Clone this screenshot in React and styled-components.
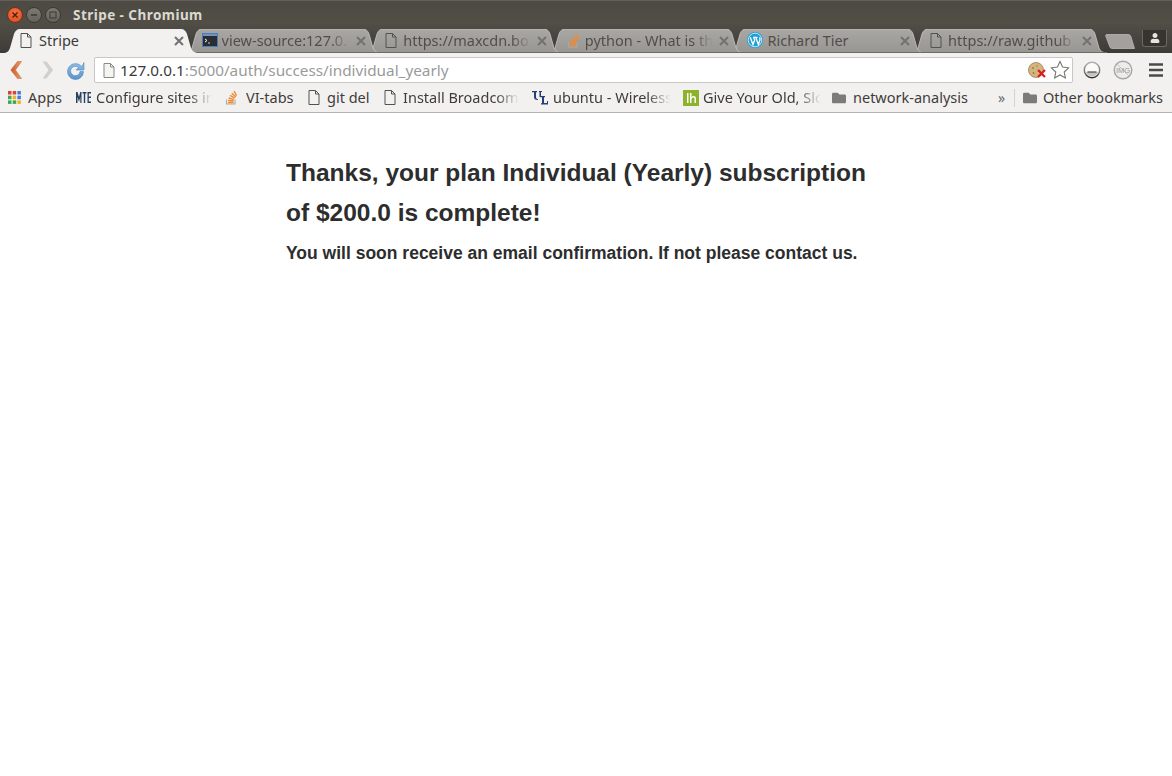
import React from 'react';
import styled, { createGlobalStyle } from 'styled-components';
import { FaUser, FaFolder } from 'react-icons/fa';

const GlobalStyle = createGlobalStyle`
  html, body {
    margin: 0;
    padding: 0;
    background: #fff;
  }
  #root {
    min-height: 776px;
  }
`;

const uiFont = `"Noto Sans", "Open Sans", "DejaVu Sans", sans-serif`;

const Chrome = styled.header`
  font-family: ${uiFont};
  background: linear-gradient(#4c4a43 0, #514e46 22px, #45433d 40px, #3c3b37 53px);
  border-top: 1px solid #63605a;
`;

const TitleBar = styled.div`
  height: 28px;
  display: flex;
  align-items: center;
  padding-left: 7px;
  gap: 3px;
`;

const WindowButton = styled.span`
  width: 16px;
  height: 16px;
  box-sizing: border-box;
  border-radius: 50%;
  display: flex;
  align-items: center;
  justify-content: center;
  background: ${(p) => (p.$close ? 'radial-gradient(circle at 50% 35%, #f0754a, #d9481c)' : 'linear-gradient(#7b7972, #65635c)')};
  border: 1px solid ${(p) => (p.$close ? '#7a3015' : '#3a3934')};
  color: ${(p) => (p.$close ? '#5c1c08' : '#3a3934')};
`;

const WindowTitle = styled.span`
  margin-left: 9px;
  font-size: 13.5px;
  font-weight: 700;
  letter-spacing: 0.45px;
  color: #dcd9d1;
`;

const TabStrip = styled.div`
  height: 24px;
  display: flex;
  padding-left: 3px;
  position: relative;
`;

const HiddenDefs = styled.svg`
  position: absolute;
`;

const Tab = styled.div`
  position: relative;
  flex: none;
  width: 196px;
  height: 24px;
  margin-right: -14.4px;
  z-index: ${(p) => p.$z};
  font-size: 14.5px;
  color: ${(p) => (p.$active ? '#3c3b37' : '#524d4a')};
`;

const TabShape = styled.svg`
  position: absolute;
  inset: 0;
`;

const TabContent = styled.div`
  position: relative;
  height: 22px;
  display: flex;
  align-items: center;
  padding-left: ${(p) => p.$pad}px;
`;

const TabIcon = styled.span`
  flex: none;
  width: 16px;
  height: 16px;
  display: flex;
  align-items: center;
  justify-content: center;
`;

const TabTitle = styled.span`
  margin-left: ${(p) => p.$gap}px;
  width: 128px;
  white-space: nowrap;
  overflow: hidden;
  ${(p) =>
    p.$fade &&
    `-webkit-mask-image: linear-gradient(to right, #000 85%, transparent);
     mask-image: linear-gradient(to right, #000 85%, transparent);`}
`;

const TabClose = styled.svg`
  position: absolute;
  left: 171px;
  top: 7px;
`;

const NewTab = styled.svg`
  flex: none;
  margin: 5px 0 0 12px;
  position: relative;
  z-index: 1;
`;

const ProfileButton = styled.div`
  position: absolute;
  right: 5px;
  top: 1px;
  width: 25px;
  height: 17px;
  box-sizing: border-box;
  display: flex;
  align-items: center;
  justify-content: center;
  color: #e6e4df;
  background: #35342f;
  border: 1px solid #6a675f;
  border-top: 0;
  border-radius: 0 0 3px 3px;
`;

const Toolbar = styled.div`
  height: 32px;
  background: #f2f1f0;
  display: flex;
  align-items: center;
  padding: 2px 7px 0 10px;
  box-sizing: border-box;
  font-family: ${uiFont};
`;

const NavIcon = styled.svg`
  flex: none;
  margin-right: ${(p) => p.$mr || 0}px;
  margin-left: ${(p) => p.$ml || 0}px;
`;

const Omnibox = styled.div`
  flex: none;
  width: 979px;
  height: 26px;
  margin-left: 9px;
  box-sizing: border-box;
  background: #fff;
  border: 1px solid #c9c7c3;
  border-radius: 2px;
  display: flex;
  align-items: center;
  padding: 0 2px 0 8px;
  font-size: 15.3px;
`;

const UrlHost = styled.span`
  margin-left: 5px;
  color: #3a3a3a;
`;

const UrlPath = styled.span`
  color: #9a9a9a;
  flex: 1;
`;

const ToolButtons = styled.div`
  display: flex;
  align-items: center;
  margin-left: 10px;
  gap: 10px;
`;

const BookmarksBar = styled.nav`
  height: 25px;
  padding: 0 0 2px 7px;
  background: #f2f1f0;
  border-bottom: 1px solid #b5b3af;
  display: flex;
  align-items: center;
  font-family: ${uiFont};
  font-size: 14.5px;
  color: #3f3c3a;
`;

const Bookmark = styled.div`
  flex: none;
  width: ${(p) => p.$w}px;
  display: flex;
  align-items: center;
  gap: ${(p) => p.$gap || 7}px;
  white-space: nowrap;
`;

const BookmarkLabel = styled.span`
  position: relative;
  top: -1px;
  overflow: hidden;
  ${(p) => p.$w && `width: ${p.$w}px;`}
  ${(p) =>
    p.$w &&
    `-webkit-mask-image: linear-gradient(to right, #000 80%, transparent);
     mask-image: linear-gradient(to right, #000 80%, transparent);`}
`;

const Divider = styled.span`
  width: 1px;
  height: 18px;
  background: #d5d3cf;
  margin: 0 8px 0 4px;
`;

const More = styled.span`
  font-size: 14px;
  color: #6b6966;
  width: 12px;
`;

const Page = styled.main`
  width: 600px;
  margin: 0 auto;
  padding-top: 40px;
  font-family: "Liberation Sans", Arial, sans-serif;
  color: #2d2d2d;
`;

const Heading = styled.h3`
  margin: 0 0 7px;
  font-size: 24.5px;
  line-height: 40px;
  font-weight: 700;
`;

const SubHeading = styled.h4`
  margin: 0;
  font-size: 17.5px;
  line-height: 26px;
  font-weight: 700;
`;

const FileIcon = ({ color = '#55524e', fill = 'none' }) => (
  <svg width="12" height="15" viewBox="0 0 12 15">
    <path d="M1 .5h6.500L11 4v10.500H1z" fill={fill} stroke={color} />
    <path d="M7.500.5V4H11" fill="none" stroke={color} />
  </svg>
);

const CloseIcon = () => (
  <TabClose width="10" height="10" viewBox="0 0 10 10">
    <path d="M1 1l8 8M9 1l-8 8" stroke="#74726f" strokeWidth="2" />
  </TabClose>
);

const TerminalIcon = () => (
  <svg width="16" height="14" viewBox="0 0 16 14">
    <rect x=".5" y=".5" width="15" height="13" fill="#2a2d33" stroke="#4a7db5" />
    <rect x="1" y="1" width="14" height="2" fill="#6f95c0" />
    <path d="M3 6l2 1.500L3 9" fill="none" stroke="#fff" />
    <path d="M6 10h2" stroke="#ccc" />
  </svg>
);

const StackIcon = () => (
  <svg width="12" height="15" viewBox="0 0 12 15">
    <path d="M1.500 9.500v4.500h8.500V9.500" fill="none" stroke="#b9a68f" strokeWidth="1.100" />
    <path d="M3 12.500h5.500M3.100 10.400l5.400.6M3.700 8l5.200 1.600M5 5.400l4.700 2.800M6.800 3.200l4 3.800M9 1.200l2.600 4.500" fill="none" stroke="#ee8a35" strokeWidth="1.400" />
  </svg>
);

const WordpressIcon = () => (
  <svg width="16" height="16" viewBox="0 0 16 16">
    <circle cx="8" cy="8" r="8" fill="#1f9fd6" />
    <circle cx="8" cy="8" r="6.800" fill="none" stroke="#e9f6fb" strokeWidth=".8" />
    <path d="M3.200 5.300L6 12.600l1.700-4.500-1.200-2.800M6.400 5.300h4.100M8.700 5.300l2.700 7.300 1.500-4.500c.3-1 .2-1.800-.4-2.800" fill="none" stroke="#fff" strokeWidth="1.300" />
  </svg>
);

const tabs = [
  { title: 'Stripe', icon: <FileIcon />, active: true, pad: 15, gap: 5 },
  { title: 'view-source:127.0.', icon: <TerminalIcon />, pad: 17, fade: true },
  { title: 'https://maxcdn.bo', icon: <FileIcon />, pad: 17, fade: true },
  { title: 'python - What is th', icon: <StackIcon />, pad: 17, fade: true },
  { title: 'Richard Tier', icon: <WordpressIcon />, pad: 18 },
  { title: 'https://raw.github', icon: <FileIcon />, pad: 17, fade: true },
];

function TabItem({ tab, z }) {
  const fill = tab.active ? '#f2f1f0' : 'url(#inactiveTab)';
  return (
    <Tab $active={tab.active} $z={z}>
      <TabShape width="196" height="24" viewBox="0 0 196 24">
        <path
          d="M0 24C4 24 6 22 7 19L11 5C12 2 14 0 17 0H178C181 0 183 2 184 5L188 19C189 22 192 24 196 24Z"
          fill={fill}
          stroke={tab.active ? 'none' : '#c9c7c3'}
          strokeWidth="0.8"
        />
        {!tab.active && <path d="M0 23.500H196" stroke="#6d6b66" />}
      </TabShape>
      <TabContent $pad={tab.pad}>
        <TabIcon>{tab.icon}</TabIcon>
        <TabTitle $gap={tab.gap ?? 4} $fade={tab.fade}>{tab.title}</TabTitle>
        <CloseIcon />
      </TabContent>
    </Tab>
  );
}

export default function App() {
  return (
    <>
      <GlobalStyle />
      <Chrome>
        <TitleBar>
          <WindowButton $close>
            <svg width="8" height="8" viewBox="0 0 8 8">
              <path d="M1.500 1.500l5 5M6.500 1.500l-5 5" stroke="currentColor" strokeWidth="1.500" />
            </svg>
          </WindowButton>
          <WindowButton>
            <svg width="8" height="8" viewBox="0 0 8 8">
              <path d="M1 4h6" stroke="currentColor" strokeWidth="1.500" />
            </svg>
          </WindowButton>
          <WindowButton>
            <svg width="8" height="8" viewBox="0 0 8 8">
              <rect x="1" y="1" width="6" height="6" fill="none" stroke="currentColor" />
            </svg>
          </WindowButton>
          <WindowTitle>Stripe - Chromium</WindowTitle>
        </TitleBar>
        <TabStrip>
          <HiddenDefs width="0" height="0">
            <defs>
              <linearGradient id="inactiveTab" x1="0" y1="0" x2="0" y2="1">
                <stop offset="0" stopColor="#a9a7a3" />
                <stop offset="1" stopColor="#989693" />
              </linearGradient>
              <linearGradient id="backArrow" x1="0" y1="0" x2="1" y2="0">
                <stop offset="0" stopColor="#c9562a" />
                <stop offset="1" stopColor="#eda06a" />
              </linearGradient>
              <linearGradient id="reloadArrow" x1="0" y1="0" x2="0" y2="1">
                <stop offset="0" stopColor="#8fc0ea" />
                <stop offset="1" stopColor="#5b93cc" />
              </linearGradient>
            </defs>
          </HiddenDefs>
          {tabs.map((tab, i) => (
            <TabItem key={tab.title} tab={tab} z={tab.active ? 10 : 9 - i} />
          ))}
          <NewTab width="30" height="15" viewBox="0 0 30 15">
            <path d="M2 .5H23C25 .5 25.500 1.500 26 3L29.500 14.500H7C5.500 14.500 5 13.500 4.500 12L.7 2C.4 1 1 .5 2 .5Z" fill="#a3a19d" stroke="#c4c2be" strokeWidth="0.7" />
          </NewTab>
          <ProfileButton>
            <FaUser size={10} />
          </ProfileButton>
        </TabStrip>
      </Chrome>

      <Toolbar>
        <NavIcon width="12" height="18" viewBox="0 0 12 18" $mr={20}>
          <path d="M7.500.5L.8 9l6.700 8.500h4L5.500 9l6-8.500z" fill="url(#backArrow)" stroke="#c5602c" strokeWidth=".5" />
        </NavIcon>
        <NavIcon width="12" height="18" viewBox="0 0 12 18" $mr={12}>
          <path d="M4.500.5L11.200 9l-6.700 8.500h-4L6.500 9l-6-8.500z" fill="#d2d0cd" />
        </NavIcon>
        <NavIcon width="19" height="19" viewBox="0 0 18 18">
          <path
            d="M15 5.500A7.500 7.500 0 1 0 16.500 10h-3.200A4.500 4.500 0 1 1 12 6.300L9.500 8.500H17V1.500z"
            fill="url(#reloadArrow)"
            stroke="#4f86bd"
            strokeWidth=".6"
          />
        </NavIcon>
        <Omnibox>
          <FileIcon color="#8a8885" fill="#f4f4f3" />
          <UrlHost>127.0.0.1</UrlHost>
          <UrlPath>:5000/auth/success/individual_yearly</UrlPath>
          <svg width="20" height="18" viewBox="0 0 20 18">
            <circle cx="8" cy="9" r="7.500" fill="#d4b57f" stroke="#9c7e4f" strokeWidth=".8" />
            <circle cx="5" cy="7" r="1" fill="#a07f4c" />
            <circle cx="9" cy="5" r=".8" fill="#a07f4c" />
            <circle cx="5.500" cy="12" r="1" fill="#a07f4c" />
            <path d="M10 9l7 7M17 9l-7 7" stroke="#d61f1f" strokeWidth="2.200" />
          </svg>
          <NavIcon width="20" height="20" viewBox="0 0 20 20" $ml={2}>
            <path
              d="M10 1.500l2.600 5.600 6 .7-4.400 4.200 1.200 6L10 15l-5.400 3 1.200-6L1.400 7.800l6-.7z"
              fill="#fff"
              stroke="#77756f"
              strokeWidth="1.100"
            />
          </NavIcon>
        </Omnibox>
        <ToolButtons>
          <svg width="18" height="18" viewBox="0 0 18 18">
            <defs>
              <linearGradient id="sphere" x1="0" y1="0" x2="0" y2="1">
                <stop offset="0" stopColor="#b5b3b0" />
                <stop offset="0.55" stopColor="#7c7a77" />
                <stop offset="1" stopColor="#2f2e2c" />
              </linearGradient>
            </defs>
            <circle cx="9" cy="9" r="7.700" fill="#fafaf9" stroke="url(#sphere)" strokeWidth="1.400" />
            <path d="M2.500 11h13a7 7 0 0 1-13 0z" fill="#c4c3c0" />
            <path d="M4.500 11h9" stroke="#4a4845" strokeWidth="1.200" />
          </svg>
          <NavIcon width="20" height="20" viewBox="0 0 20 20" $ml={2}>
            <circle cx="10" cy="10" r="8.800" fill="#ececea" stroke="#a8a6a3" strokeWidth="1.400" />
            <path d="M4 4l12 12" stroke="#c2c0bd" strokeWidth="1" />
            <text x="10" y="12.500" fontSize="7.500" textAnchor="middle" fill="#9c9a97" fontFamily="Liberation Sans">IMG</text>
          </NavIcon>
          <NavIcon width="14" height="14" viewBox="0 0 14 14" $ml={6}>
            <path d="M0 1.500h14M0 7h14M0 12.500h14" stroke="#4c4a47" strokeWidth="2.600" />
          </NavIcon>
        </ToolButtons>
      </Toolbar>

      <BookmarksBar>
        <Bookmark $w={69} $gap={6}>
          <svg width="15" height="15" viewBox="0 0 15 15">
            <rect x="1" y="1" width="3.500" height="3.500" fill="#e0402f" />
            <rect x="5.700" y="1" width="3.500" height="3.500" fill="#e0402f" />
            <rect x="10.400" y="1" width="3.500" height="3.500" fill="#3d7fe0" />
            <rect x="1" y="5.700" width="3.500" height="3.500" fill="#3fa653" />
            <rect x="5.700" y="5.700" width="3.500" height="3.500" fill="#f3b516" />
            <rect x="10.400" y="5.700" width="3.500" height="3.500" fill="#3d7fe0" />
            <rect x="1" y="10.400" width="3.500" height="3.500" fill="#3fa653" />
            <rect x="5.700" y="10.400" width="3.500" height="3.500" fill="#3fa653" />
            <rect x="10.400" y="10.400" width="3.500" height="3.500" fill="#f3b516" />
          </svg>
          <BookmarkLabel>Apps</BookmarkLabel>
        </Bookmark>
        <Bookmark $w={149} $gap={4}>
          <svg width="16" height="13" viewBox="0 0 16 13">
            <path d="M0 1h1.500L3 6l1.200-5H5.500v11H4.300V6L3 11 1.500 6v6H0zM6.500 1h4v1.500H9.200V12H7.800V2.500H6.500zM11.500 1H15v1.500h-2.200v3H15V7h-2.200v3.500H15V12h-3.500z" fill="#27405f" />
          </svg>
          <BookmarkLabel $w={116}>Configure sites in</BookmarkLabel>
        </Bookmark>
        <Bookmark $w={83} $gap={9}>
          <StackIcon />
          <BookmarkLabel>VI-tabs</BookmarkLabel>
        </Bookmark>
        <Bookmark $w={76} $gap={7}>
          <FileIcon />
          <BookmarkLabel>git del</BookmarkLabel>
        </Bookmark>
        <Bookmark $w={148} $gap={7}>
          <FileIcon />
          <BookmarkLabel $w={116}>Install Broadcom</BookmarkLabel>
        </Bookmark>
        <Bookmark $w={151} $gap={5}>
          <svg width="16" height="16" viewBox="0 0 16 16">
            <path d="M0 1h5v1.200H4V7c0 1.500 1 2 2 2V10C3 10 2 9 2 7V2.200H0zM7 1h3v1H9v5H7.500V2H7z" fill="#27406f" />
            <path d="M8 6h5v1.200h-1V13h3v-2h1v3.500H9v-1.200h1V7.200H8z" fill="#27406f" />
          </svg>
          <BookmarkLabel $w={118}>ubuntu - Wireless</BookmarkLabel>
        </Bookmark>
        <Bookmark $w={149} $gap={4}>
          <svg width="16" height="16" viewBox="0 0 16 16">
            <rect width="16" height="16" fill="#8cb32a" />
            <path d="M4 3h1.500v10H4zM7 3h1.500v4C9 6.500 10 6 11 6c1 0 2 1 2 2.500V13h-1.500V9c0-1-.5-1.500-1-1.500-.7 0-2 .5-2 1.500v4H7z" fill="#fff" />
          </svg>
          <BookmarkLabel $w={118}>Give Your Old, Slo</BookmarkLabel>
        </Bookmark>
        <Bookmark $w={166} $gap={7}>
          <FaFolder size={14} color="#7d7b78" />
          <BookmarkLabel>network-analysis</BookmarkLabel>
        </Bookmark>
        <More>»</More>
        <Divider />
        <Bookmark $w={140} $gap={6}>
          <FaFolder size={14} color="#7d7b78" />
          <BookmarkLabel>Other bookmarks</BookmarkLabel>
        </Bookmark>
      </BookmarksBar>

      <Page>
        <Heading>Thanks, your plan Individual (Yearly) subscription of $200.0 is complete!</Heading>
        <SubHeading>You will soon receive an email confirmation. If not please contact us.</SubHeading>
      </Page>
    </>
  );
}
